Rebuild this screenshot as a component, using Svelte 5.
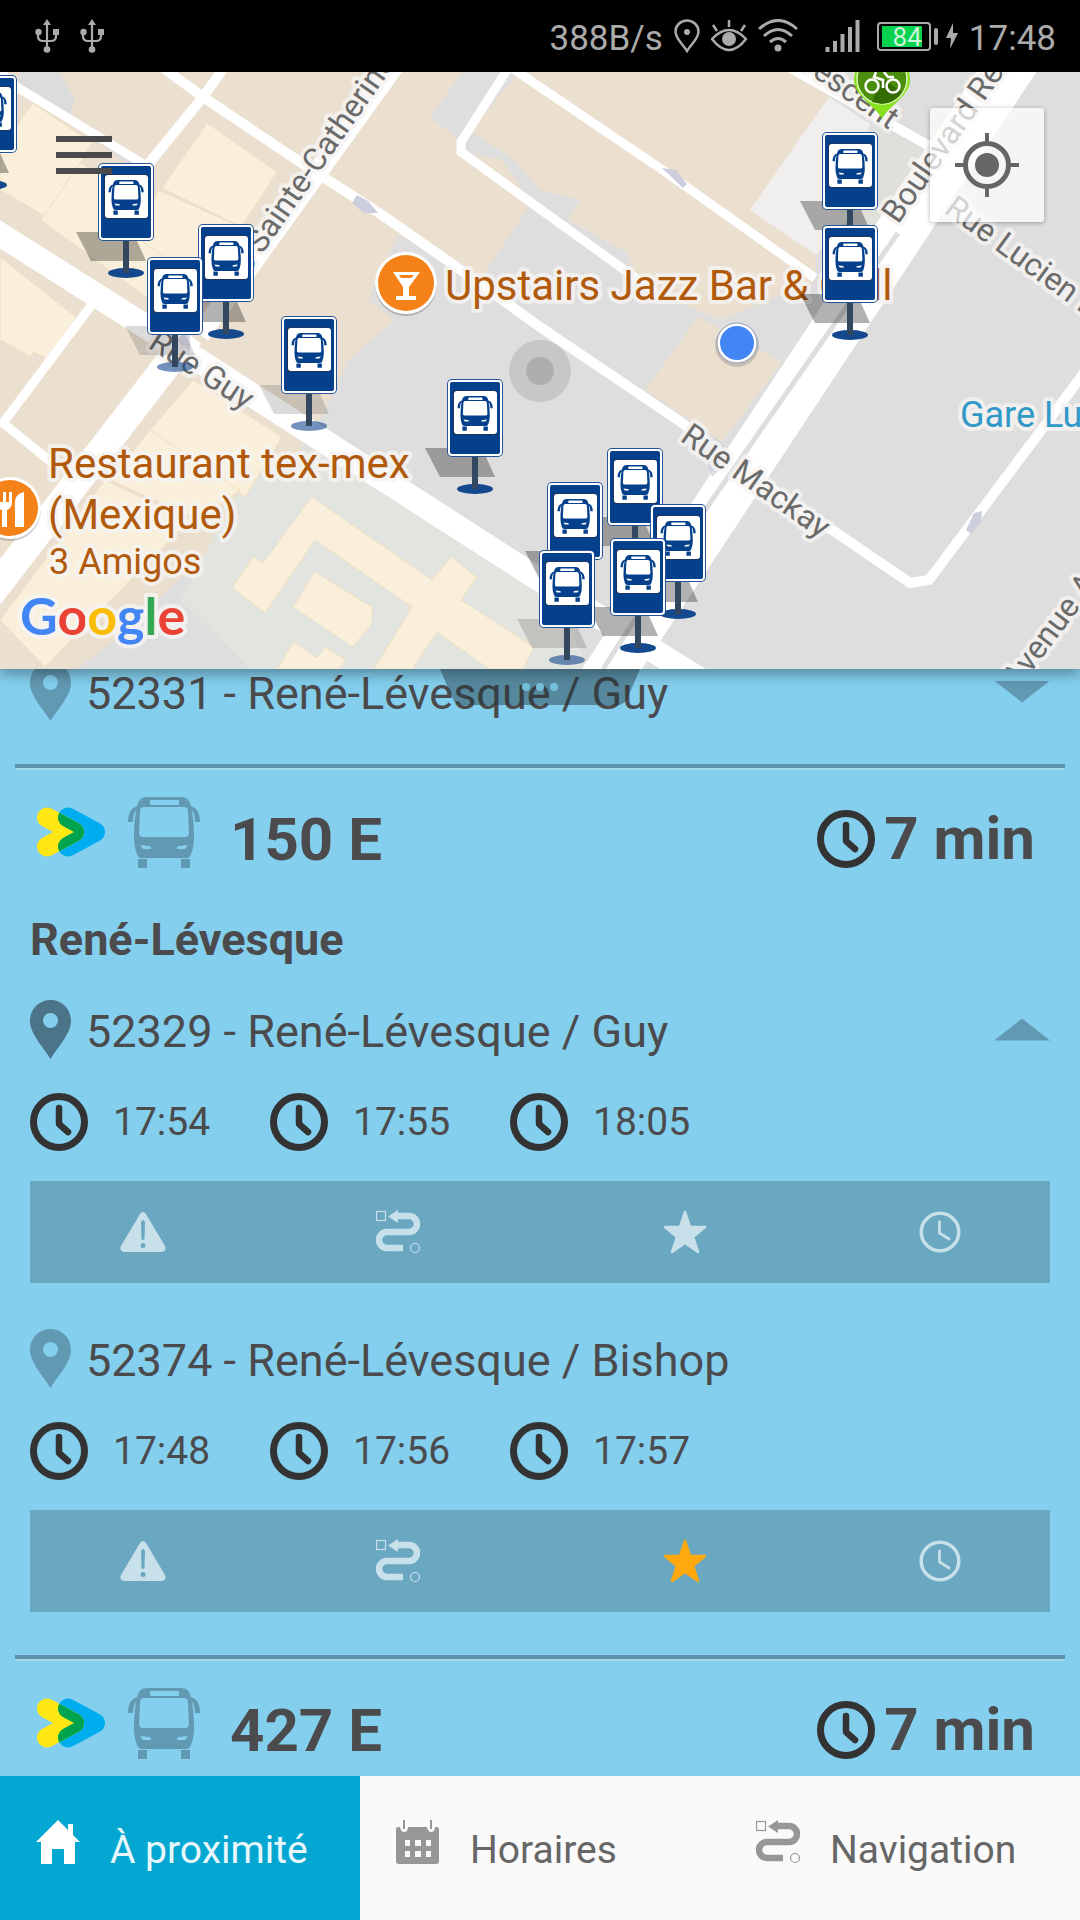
<script lang="ts">
  type Stop = {
    code: string
    name: string
    times: string[]
    open: boolean | null
    favorite: boolean
  }

  type Route = {
    id: string
    direction: string
    wait: string
    stops: Stop[]
  }

  const previousStop = '52331 - René-Lévesque / Guy'

  const routes: Route[] = [
    {
      id: '150 E',
      direction: 'René-Lévesque',
      wait: '7 min',
      stops: [
        {
          code: '52329',
          name: 'René-Lévesque / Guy',
          times: ['17:54', '17:55', '18:05'],
          open: true,
          favorite: false,
        },
        {
          code: '52374',
          name: 'René-Lévesque / Bishop',
          times: ['17:48', '17:56', '17:57'],
          open: null,
          favorite: true,
        },
      ],
    },
    { id: '427 E', direction: '', wait: '7 min', stops: [] },
  ]

  // top-left corner of each sign; "far" stops have a paler foot
  const signs = [
    { x: -39, y: 75 },
    { x: 98, y: 163 },
    { x: 198, y: 224 },
    { x: 147, y: 257, far: true },
    { x: 281, y: 316, far: true },
    { x: 447, y: 379 },
    { x: 822, y: 132 },
    { x: 822, y: 225 },
    { x: 607, y: 448 },
    { x: 547, y: 482 },
    { x: 650, y: 504 },
    { x: 610, y: 538 },
    { x: 539, y: 550, far: true },
  ]

  const buildings = [
    '33,103 92,143 80,163 45,216 0,190 0,150',
    '80,163 215,245 150,300 41,220',
    '207,123 277,172 241,227 162,188',
    '158,190 241,227 205,285 140,240',
    '0,257 76,317 50,360 34,352 30,356 0,340',
    '193,380 282,437 245,497 150,430',
    '150,430 240,490 200,520 110,480',
    '0,620 105,480 190,520 45,667',
    '312,497 432,580 451,557 477,577 461,600 534,647 523,669 489,669 437,632 412,669 374,669 412,607 315,540 265,613 232,588 253,557 263,563',
    '315,572 372,607 372,623 353,647 293,607',
    '294,642 317,658 325,647 346,660 339,669 277,669',
  ]

  let activeTab = $state('proximite')
</script>

{#snippet busShape()}
  <path
    fill-rule="evenodd"
    d="M19 0H53Q61 0 63 9Q66 22 66 40Q66 50 63 57Q62 61 58 61H14Q10 61 9 57Q6 50 6 40Q6 22 9 9Q11 0 19 0ZM23 3Q22 3 22 4V7Q22 8 23 8H50Q51 8 51 7V4Q51 3 50 3ZM16 10Q12 10 12 15L11 36Q11 40 15 40H57Q61 40 61 36L60 15Q60 10 56 10ZM12 48L15 52H23Q24 50 21 49ZM60 48L57 52H49Q48 50 51 49Z"
  />
  <path d="M10 62H19V71H10ZM53 62H62V71H53Z" />
  <path d="M0 25Q0 11 10 9V12Q5 14 5 25ZM72 25Q72 11 62 9V12Q67 14 67 25Z" />
{/snippet}

{#snippet pin()}
  <svg class="pin" viewBox="0 0 41 59" aria-hidden="true">
    <path fill-rule="evenodd" d="M20.500 0C9 0 0 9 0 21C0 34 14 48 20.500 59C27 48 41 34 41 21C41 9 32 0 20.500 0ZM20.500 13A7.500 7.500 0 1 1 20.500 28A7.500 7.500 0 1 1 20.500 13Z" />
  </svg>
{/snippet}

{#snippet clock()}
  <svg class="clock" viewBox="0 0 58 58" aria-hidden="true">
    <circle cx="29" cy="29" r="25.500" stroke-width="7" />
    <path d="M29 15V31L38 39" stroke-width="6.500" />
  </svg>
{/snippet}

{#snippet routeIcon()}
  <svg class="icon" viewBox="0 0 44 44" aria-hidden="true">
    <path d="M21 6H33A8 8 0 0 1 33 22H11A8 8 0 0 0 11 38H27" fill="none" stroke="currentColor" stroke-width="6.500" />
    <path d="M12 6.500L22 0V13Z" fill="currentColor" />
    <rect x="0.500" y="1.500" width="9" height="9" fill="none" stroke="currentColor" stroke-width="1.200" />
    <circle cx="39" cy="38" r="4.500" fill="none" stroke="currentColor" stroke-width="1.200" />
  </svg>
{/snippet}

{#snippet usb()}
  <svg class="usb" viewBox="0 0 24 34" aria-hidden="true">
    <path d="M12 4V30M3 13V17Q3 22 8 22H16Q21 22 21 17V13" fill="none" stroke="currentColor" stroke-width="2.200" />
    <path d="M12 0L16 6H8ZM18 10H24V16H18Z" fill="currentColor" />
    <circle cx="3.500" cy="13" r="3.200" fill="currentColor" />
    <circle cx="12" cy="30.500" r="3.300" fill="currentColor" />
  </svg>
{/snippet}

<div class="app">
  <header class="status">
    <div class="status-left">
      {@render usb()}
      {@render usb()}
    </div>
    <div class="status-right">
      <span>388B/s</span>
      <svg width="26" height="34" viewBox="0 0 26 34" aria-hidden="true">
        <path d="M13 32C9 25 1.500 20 1.500 12.500A11.500 11 0 0 1 24.500 12.500C24.500 20 17 25 13 32Z" fill="none" stroke="currentColor" stroke-width="2.500" />
        <circle cx="13" cy="13" r="3" fill="currentColor" />
      </svg>
      <svg width="36" height="34" viewBox="0 0 36 34" aria-hidden="true">
        <path d="M1 20Q18 2 35 20Q18 42 1 20ZM18 1V8M2 6L6 12M34 6L30 12" fill="none" stroke="currentColor" stroke-width="2.500" />
        <circle cx="18" cy="20" r="7" fill="currentColor" />
      </svg>
      <svg width="40" height="34" viewBox="0 0 40 34" aria-hidden="true">
        <path d="M1 10Q20 -7 39 10M6 17Q20 4 34 17M12 23Q20 16 28 23" fill="none" stroke="currentColor" stroke-width="3" />
        <circle cx="20" cy="29" r="3.500" fill="currentColor" />
      </svg>
      <svg class="signal" width="36" height="34" viewBox="0 0 36 34" aria-hidden="true">
        <path d="M2.500 28V33M10 22V33M17.500 15V33M25 8V33M32.500 1V33" stroke="currentColor" stroke-width="4" />
      </svg>
      <div class="battery"><span>84</span></div>
      <svg width="12" height="26" viewBox="0 0 12 26" aria-hidden="true">
        <path d="M7 0L0 15H5L4 26L12 10H7Z" fill="currentColor" />
      </svg>
      <span class="time">17:48</span>
    </div>
  </header>

  <section class="map" aria-label="Carte">
    <svg class="map-canvas" viewBox="0 72 1080 597" preserveAspectRatio="xMidYMid slice">
      <rect x="0" y="72" width="1080" height="597" fill="#dedede" />
      <g fill="#ebdfd0">
        <path d="M0 72H462L430 118L455 136L465 155L500 158L517 180L530 205L500 250L480 280L440 252L398 236L385 262L368 300L395 320L348 360L324 413L300 450L200 560L115 640L76 669H0Z" />
        <path d="M520 72H798L829 97L750 210L816 255V280L720 320L640 285L626 252L568 220L580 200L540 190L514 160L470 130Z" />
        <path d="M698 317L645 390L722 442L782 362Z" />
      </g>
      <path d="M829 97L870 124L908 150L816 255L750 210Z" fill="#f0efed" />
      <path d="M870 124L929 155L880 230L845 205Z" fill="#e0e0db" />
      <path d="M20 72H60L75 100L70 115L145 160L130 165L18 85Z" fill="#dcdcdc" />
      <path d="M245 480L330 440L540 575L590 669H250L180 600Z" fill="#e2e4df" />
      {#each buildings as points}
        <polygon {points} fill="#f9efda" stroke="#eee0c2" />
      {/each}

      <g fill="none" stroke="#fff">
        <path d="M0 72L17 87L150 168" stroke-width="9" />
        <path d="M228 62L203 97L146 167" stroke-width="10" />
        <path d="M155 62L203 97L306 166L379 213L458 268L540 327L678 420L750 474L910 583L929 580L1090 365" stroke-width="10" />
        <path d="M512 62L461 142V152L540 209L655 292" stroke-width="9" />
        <path d="M500 60L667 173L815 278" stroke-width="9" />
        <path d="M780 62L940 152" stroke-width="10" />
        <path d="M93 303L3 423L56 466" stroke-width="9" />
        <path d="M-10 228L148 328L540 580L712 687" stroke-width="24" />
        <path d="M397 62L200 335" stroke-width="20" />
        <path d="M190 335L-10 595" stroke-width="28" />
        <path d="M1040 21L592 699" stroke-width="50" />
      </g>
      <path d="M898 233L712 500L603 669" stroke="#dedede" stroke-width="5" fill="none" />
      <g fill="#cccddd">
        <path d="M357 195L368 201L378 213L364 213L352 203Z" />
        <path d="M662 168L676 170L687 184L683 188Z" />
        <path d="M966 530L974 513L982 511L981 522L971 534Z" />
        <path d="M708 435L722 442L730 460L712 477L705 455Z" opacity="0.700" />
        <path d="M175 340L190 330L190 360L175 365Z" opacity="0.700" />
      </g>

      <g class="street">
        <text transform="translate(226 306) rotate(-55)">Rue Sainte-Catherine</text>
        <text transform="translate(147 347) rotate(33)">Rue Guy</text>
        <text transform="translate(679 440) rotate(35)">Rue Mackay</text>
        <text transform="translate(898 225) rotate(-55)">Boulevard René-Lévesque</text>
        <text transform="translate(889 130) rotate(35)" text-anchor="end">Rue Crescent</text>
        <text transform="translate(943 212) rotate(36)">Rue Lucien L'Allier</text>
        <text transform="translate(1018 690) rotate(-53)">Avenue Argyle</text>
      </g>

      <circle cx="540" cy="371" r="31" fill="#000" opacity="0.100" />
      <circle cx="540" cy="371" r="14" fill="#000" opacity="0.120" />

      <g class="place">
        <text x="445" y="300">Upstairs Jazz Bar &amp; Grill</text>
        <text x="48" y="478">Restaurant tex-mex</text>
        <text x="48" y="529">(Mexique)</text>
        <text class="small" x="49" y="574">3 Amigos</text>
        <text class="small station" x="960" y="427">Gare Lucien-L'Allier</text>
      </g>

      <g>
        <circle cx="406" cy="285" r="31" fill="#000" opacity="0.200" />
        <circle cx="406" cy="283" r="31" fill="#fff" />
        <circle cx="406" cy="283" r="28" fill="#f58219" />
        <path fill-rule="evenodd" d="M393 272H420L409 287V296H416V300H396V296H403V287ZM399 275L401 278H411L414 275Z" fill="#fff" />
        <circle cx="10" cy="510" r="31" fill="#000" opacity="0.200" />
        <circle cx="10" cy="508" r="31" fill="#fff" />
        <circle cx="10" cy="508" r="28" fill="#f58219" />
        <path d="M15 527V508Q13 494 24 492V527ZM-4 492H-1V502H3V492H6V502H9V492H12V502Q12 508 7 510V527H2V510Q-4 508 -4 502Z" fill="#fff" />
      </g>

      <circle cx="737" cy="345" r="22" fill="#000" opacity="0.150" />
      <circle cx="737" cy="343" r="20" fill="#fff" stroke="#8fa0bc" />
      <circle cx="737" cy="343" r="17" fill="#4285f4" />

      <g>
        <path d="M854 80A28 28 0 0 1 910 80C910 96 888 106 882 119C876 106 854 96 854 80Z" fill="#86e01c" />
        <circle cx="882" cy="79" r="25" fill="#4b8d0c" stroke="#d9f7b0" stroke-width="1.500" />
        <path d="M872 102L882 78L902 92Q895 103 882 104Z" fill="#356d05" />
        <g fill="none" stroke="#fff" stroke-width="2.500">
          <circle cx="872" cy="86" r="6.500" />
          <circle cx="893" cy="86" r="6.500" />
          <path d="M876 72L874 77L883 80V88M884 72L888 77H894" />
        </g>
      </g>

      {#each signs as sign}
        <g transform="translate({sign.x} {sign.y})">
          <path d="M-22 69H35L48 98H-7Z" fill="#000" opacity={sign.far ? 0.14 : 0.3} />
          <ellipse cx="28" cy="110" rx="18" ry="5" fill="#14488f" opacity={sign.far ? 0.6 : 1} />
          <rect x="25" y="76" width="6" height="34" fill="#33475f" />
          <rect x="0" y="0" width="56" height="78" rx="5" fill="#24539a" />
          <rect x="1" y="1" width="54" height="76" rx="4" fill="#fff" />
          <rect x="3" y="3" width="50" height="72" rx="2" fill="#04408b" />
          <rect x="6" y="11" width="44" height="45" rx="3" fill="#1d3560" />
          <rect x="7" y="12" width="43" height="43" rx="3" fill="#fff" />
          <g transform="translate(10.500 17) scale(0.490)" fill="#04408b">
            {@render busShape()}
          </g>
        </g>
      {/each}

      <text class="google" x="20" y="635"><tspan fill="#4285f4">G</tspan><tspan fill="#ea4335">o</tspan><tspan fill="#fbbc05">o</tspan><tspan fill="#4285f4">g</tspan><tspan fill="#34a853">l</tspan><tspan fill="#ea4335">e</tspan></text>
    </svg>

    <button class="menu" aria-label="Menu">
      <i></i><i></i><i></i>
    </button>
    <button class="locate" aria-label="Ma position">
      <svg width="64" height="64" viewBox="0 0 64 64" aria-hidden="true">
        <circle cx="32" cy="32" r="21.500" fill="none" stroke="#666" stroke-width="5" />
        <circle cx="32" cy="32" r="12" fill="#666" />
        <path d="M32 0V10M32 54V64M0 32H10M54 32H64" stroke="#666" stroke-width="4" />
      </svg>
    </button>
    <div class="handle"><i></i><i></i><i></i></div>
  </section>

  <main class="list">
    <div class="list-scroll">
      <div class="stop-row">
        {@render pin()}
        <span class="stop-name">{previousStop}</span>
        <button class="toggle" aria-label="Ouvrir"></button>
      </div>

      {#each routes as route, i}
        <section class="route">
          <div class="route-head">
            <svg class="logo" viewBox="0 0 69 50" aria-hidden="true">
              <mask id="overlap-{i}" maskUnits="userSpaceOnUse" x="0" y="0" width="69" height="50">
                <path d="M31 10.500L58 25L31 39.500" stroke="#fff" />
              </mask>
              <path d="M31 10.500L58 25L31 39.500" stroke="#00aeef" />
              <path d="M10 10.500L37 25L10 39.500" stroke="#ffe714" />
              <g mask="url(#overlap-{i})">
                <path d="M10 10.500L37 25L10 39.500" stroke="#00a34d" />
              </g>
            </svg>
            <svg class="bus" viewBox="0 0 72 71" aria-hidden="true">{@render busShape()}</svg>
            <h2>{route.id}</h2>
            <div class="wait">
              {@render clock()}
              <span>{route.wait}</span>
            </div>
          </div>

          {#if route.direction}
            <h3>{route.direction}</h3>
          {/if}

          {#each route.stops as stop}
            <article class="stop">
              <div class="stop-row" class:selected={stop.open}>
                {@render pin()}
                <span class="stop-name">{stop.code} - {stop.name}</span>
                {#if stop.open !== null}
                  <button class="toggle" class:open={stop.open} aria-label="Fermer"></button>
                {/if}
              </div>
              <div class="times">
                {#each stop.times as time}
                  <div class="departure">
                    {@render clock()}
                    <span>{time}</span>
                  </div>
                {/each}
              </div>
              <div class="actions">
                <button aria-label="Alertes">
                  <svg class="icon" viewBox="0 0 46 44" aria-hidden="true">
                    <path fill-rule="evenodd" d="M20 4Q23 0 26 4L45 36Q47 41 42 42H4Q-1 41 1 36ZM21 12L21.500 29Q23 31 24.500 29L25 12Q23 8 21 12ZM23 33A2.300 2.300 0 1 0 23 38A2.300 2.300 0 1 0 23 33Z" fill="currentColor" />
                  </svg>
                </button>
                <button aria-label="Trajet">{@render routeIcon()}</button>
                <button class:favorite={stop.favorite} aria-label="Favori">
                  <svg class="icon" viewBox="0 0 44 44" aria-hidden="true">
                    <path d="M22 2L27 17H42L30 27L35 42L22 33L9 42L14 27L2 17H17Z" fill="currentColor" stroke="currentColor" stroke-width="2.500" stroke-linejoin="round" />
                  </svg>
                </button>
                <button aria-label="Horaire">
                  <svg class="icon" viewBox="0 0 44 44" fill="none" stroke="currentColor" stroke-linecap="round" aria-hidden="true">
                    <circle cx="22" cy="22" r="18.800" stroke-width="3.500" />
                    <path d="M21.500 12V23L31 29" stroke-width="2.800" />
                  </svg>
                </button>
              </div>
            </article>
          {/each}
        </section>
      {/each}
    </div>
  </main>

  <nav class="tabs">
    <a href="#proximite" class:active={activeTab === 'proximite'} onclick={() => (activeTab = 'proximite')}>
      <svg class="icon" viewBox="0 0 44 44" aria-hidden="true">
        <path d="M22 0L32 10V4H37V15L44 22H39V44H28V29H16V44H5V22H0Z" fill="currentColor" />
      </svg>
      <span>À proximité</span>
    </a>
    <a href="#horaires" class:active={activeTab === 'horaires'} onclick={() => (activeTab = 'horaires')}>
      <svg class="icon" viewBox="0 0 44 44" aria-hidden="true">
        <path d="M3 7H4Q5 12 8 12Q12 12 12 7H31Q32 12 35 12Q39 12 39 7H41Q43 7 43 9V41Q43 44 40 44H3Q0 44 0 41V9Q0 7 3 7Z" fill="currentColor" />
        <path d="M8 0V9M35 0V9" stroke="currentColor" stroke-width="2" />
        <path d="M9 20H14V26H9ZM19 20H25V26H19ZM30 20H35V26H30ZM9 31H14V37H9ZM19 31H25V37H19ZM30 31H35V37H30Z" fill="#fafafa" />
      </svg>
      <span>Horaires</span>
    </a>
    <a href="#navigation" class:active={activeTab === 'navigation'} onclick={() => (activeTab = 'navigation')}>
      {@render routeIcon()}
      <span>Navigation</span>
    </a>
  </nav>
</div>

<style>
  :global(body) {
    margin: 0;
  }

  .app {
    display: flex;
    flex-direction: column;
    height: 100vh;
    font-family: Roboto, 'Liberation Sans', sans-serif;
    color: #4b4a4c;
    background: #84cfee;
  }

  button {
    padding: 0;
    border: 0;
    background: none;
    color: inherit;
    font: inherit;
  }

  .status {
    display: flex;
    flex: none;
    justify-content: space-between;
    align-items: center;
    height: 72px;
    padding: 0 24px 0 35px;
    box-sizing: border-box;
    background: #000;
    color: #ababab;
    font-size: 35px;
  }

  .status-left {
    display: flex;
    gap: 21px;
  }

  .usb {
    width: 24px;
    height: 34px;
  }

  .status-right {
    display: flex;
    align-items: center;
    gap: 11px;
  }

  .status-right > span {
    padding-top: 4px;
  }

  .signal {
    margin-left: 16px;
  }

  .battery {
    position: relative;
    width: 54px;
    height: 29px;
    margin: 0 4px 0 5px;
    padding: 2px 7px 2px 3px;
    box-sizing: border-box;
    border: 2px solid #ababab;
    border-radius: 4px;
  }

  .battery::after {
    content: '';
    position: absolute;
    right: -9px;
    top: 4px;
    width: 4px;
    height: 17px;
    border-radius: 2px;
    background: #ababab;
  }

  .battery span {
    display: block;
    height: 100%;
    background: #05d350;
    color: #cdf5da;
    font-size: 26px;
    line-height: 22px;
    text-align: right;
  }

  .map {
    position: relative;
    z-index: 1;
    flex: none;
    height: 597px;
    box-shadow: 0 4px 14px rgba(0, 0, 0, 0.4);
  }

  .map-canvas {
    display: block;
    width: 100%;
    height: 100%;
  }

  .map-canvas text {
    paint-order: stroke;
    stroke: rgba(246, 244, 242, 0.8);
    stroke-width: 8px;
    stroke-linejoin: round;
  }

  .street {
    fill: #6b6b6b;
    font-size: 32px;
  }

  .place {
    fill: #b15a0c;
    font-size: 42px;
  }

  .place .small {
    font-size: 36px;
  }

  .place .station {
    fill: #3199c8;
  }

  .google {
    font-family: Lato, sans-serif;
    font-size: 52px;
    font-weight: 700;
  }

  .menu {
    position: absolute;
    top: 64px;
    left: 56px;
    display: flex;
    flex-direction: column;
    gap: 10px;
    width: 56px;
  }

  .menu i {
    height: 6px;
    background: #4a4a4c;
  }

  .locate {
    position: absolute;
    top: 36px;
    right: 36px;
    display: grid;
    place-items: center;
    width: 114px;
    height: 114px;
    border-radius: 3px;
    background: rgba(255, 255, 255, 0.7);
    box-shadow: 0 1px 5px rgba(0, 0, 0, 0.3);
  }

  .handle {
    position: absolute;
    top: 100%;
    left: 50%;
    display: flex;
    justify-content: center;
    align-items: center;
    gap: 6px;
    width: 200px;
    height: 36px;
    transform: translateX(-50%);
    background: rgba(30, 50, 60, 0.45);
    clip-path: polygon(0 0, 100% 0, 93% 90%, 90% 100%, 10% 100%, 7% 90%);
  }

  .handle i {
    width: 8px;
    height: 8px;
    border-radius: 50%;
    background: #74bedb;
  }

  .list {
    flex: 1;
    min-height: 0;
    overflow: hidden;
  }

  /* the list is scrolled a little under the map */
  .list-scroll {
    margin-top: -7px;
  }

  .list-scroll > .stop-row {
    padding: 0 30px;
  }

  .stop-row {
    display: flex;
    align-items: center;
    height: 59px;
    color: #6299b2;
  }

  .stop-row.selected .pin {
    color: #4b7488;
  }

  .pin {
    width: 41px;
    height: 59px;
    margin-right: 15px;
    fill: currentColor;
  }

  .stop-name {
    flex: 1;
    padding-top: 4px;
    color: #4b4a4c;
    font-size: 45px;
    line-height: 52px;
  }

  .toggle {
    width: 56px;
    height: 22px;
    background: #6299b2;
    clip-path: polygon(0 0, 100% 0, 50% 100%);
  }

  .toggle.open {
    clip-path: polygon(50% 0, 100% 100%, 0 100%);
  }

  .route {
    padding: 0 30px;
    margin-top: 43px;
  }

  .route::before {
    content: '';
    display: block;
    height: 4px;
    margin: 0 -15px;
    background: #5d93ad;
    border-bottom: 2px solid #a3d7ec;
  }

  .route-head {
    display: flex;
    align-items: center;
    height: 72px;
    margin-top: 26px;
  }

  .logo {
    width: 69px;
    height: 50px;
    margin: 0 22px 0 7px;
  }

  .logo path {
    fill: none;
    stroke-width: 20;
    stroke-linecap: round;
    stroke-linejoin: round;
  }

  .bus {
    width: 72px;
    height: 71px;
    fill: #6299b2;
  }

  h2 {
    flex: 1;
    margin: 0 0 0 30px;
    padding-top: 16px;
    font-size: 60px;
    font-weight: 700;
    line-height: 60px;
  }

  .wait {
    display: flex;
    align-items: center;
    gap: 9px;
    padding: 14px 15px 0 0;
    font-size: 60px;
    font-weight: 700;
    line-height: 60px;
  }

  .clock {
    width: 58px;
    height: 58px;
    fill: none;
    stroke: #333;
    stroke-linecap: round;
    stroke-linejoin: round;
  }

  h3 {
    margin: 46px 0 34px;
    font-size: 45px;
    font-weight: 700;
    line-height: 52px;
  }

  .stop + .stop {
    margin-top: 46px;
  }

  .times {
    display: flex;
    margin: 34px 0 30px;
  }

  .departure {
    display: flex;
    align-items: center;
    gap: 25px;
    width: 240px;
    height: 58px;
    font-size: 39px;
  }

  .actions {
    display: grid;
    grid-template-columns: repeat(4, 1fr);
    height: 102px;
    background: #6aa7c1;
    color: #c8e0ea;
  }

  .actions button {
    display: grid;
    place-items: center;
    padding-right: 30px;
  }

  .actions button:nth-child(n + 3) {
    padding: 0 0 0 34px;
  }

  .actions .favorite {
    color: #ffa90f;
  }

  .icon {
    height: 44px;
  }

  .tabs {
    display: grid;
    grid-template-columns: repeat(3, 1fr);
    flex: none;
    height: 144px;
    background: #fafafa;
  }

  .tabs a {
    display: flex;
    align-items: center;
    gap: 30px;
    padding-left: 36px;
    color: #979797;
    font-size: 39px;
    text-decoration: none;
  }

  .tabs .icon {
    width: 44px;
    margin-bottom: 12px;
  }

  .tabs span {
    padding-top: 4px;
    color: #666;
  }

  .tabs .active {
    background: #03a7d1;
    color: #fff;
  }

  .tabs .active span {
    color: #e8f7fc;
  }
</style>
